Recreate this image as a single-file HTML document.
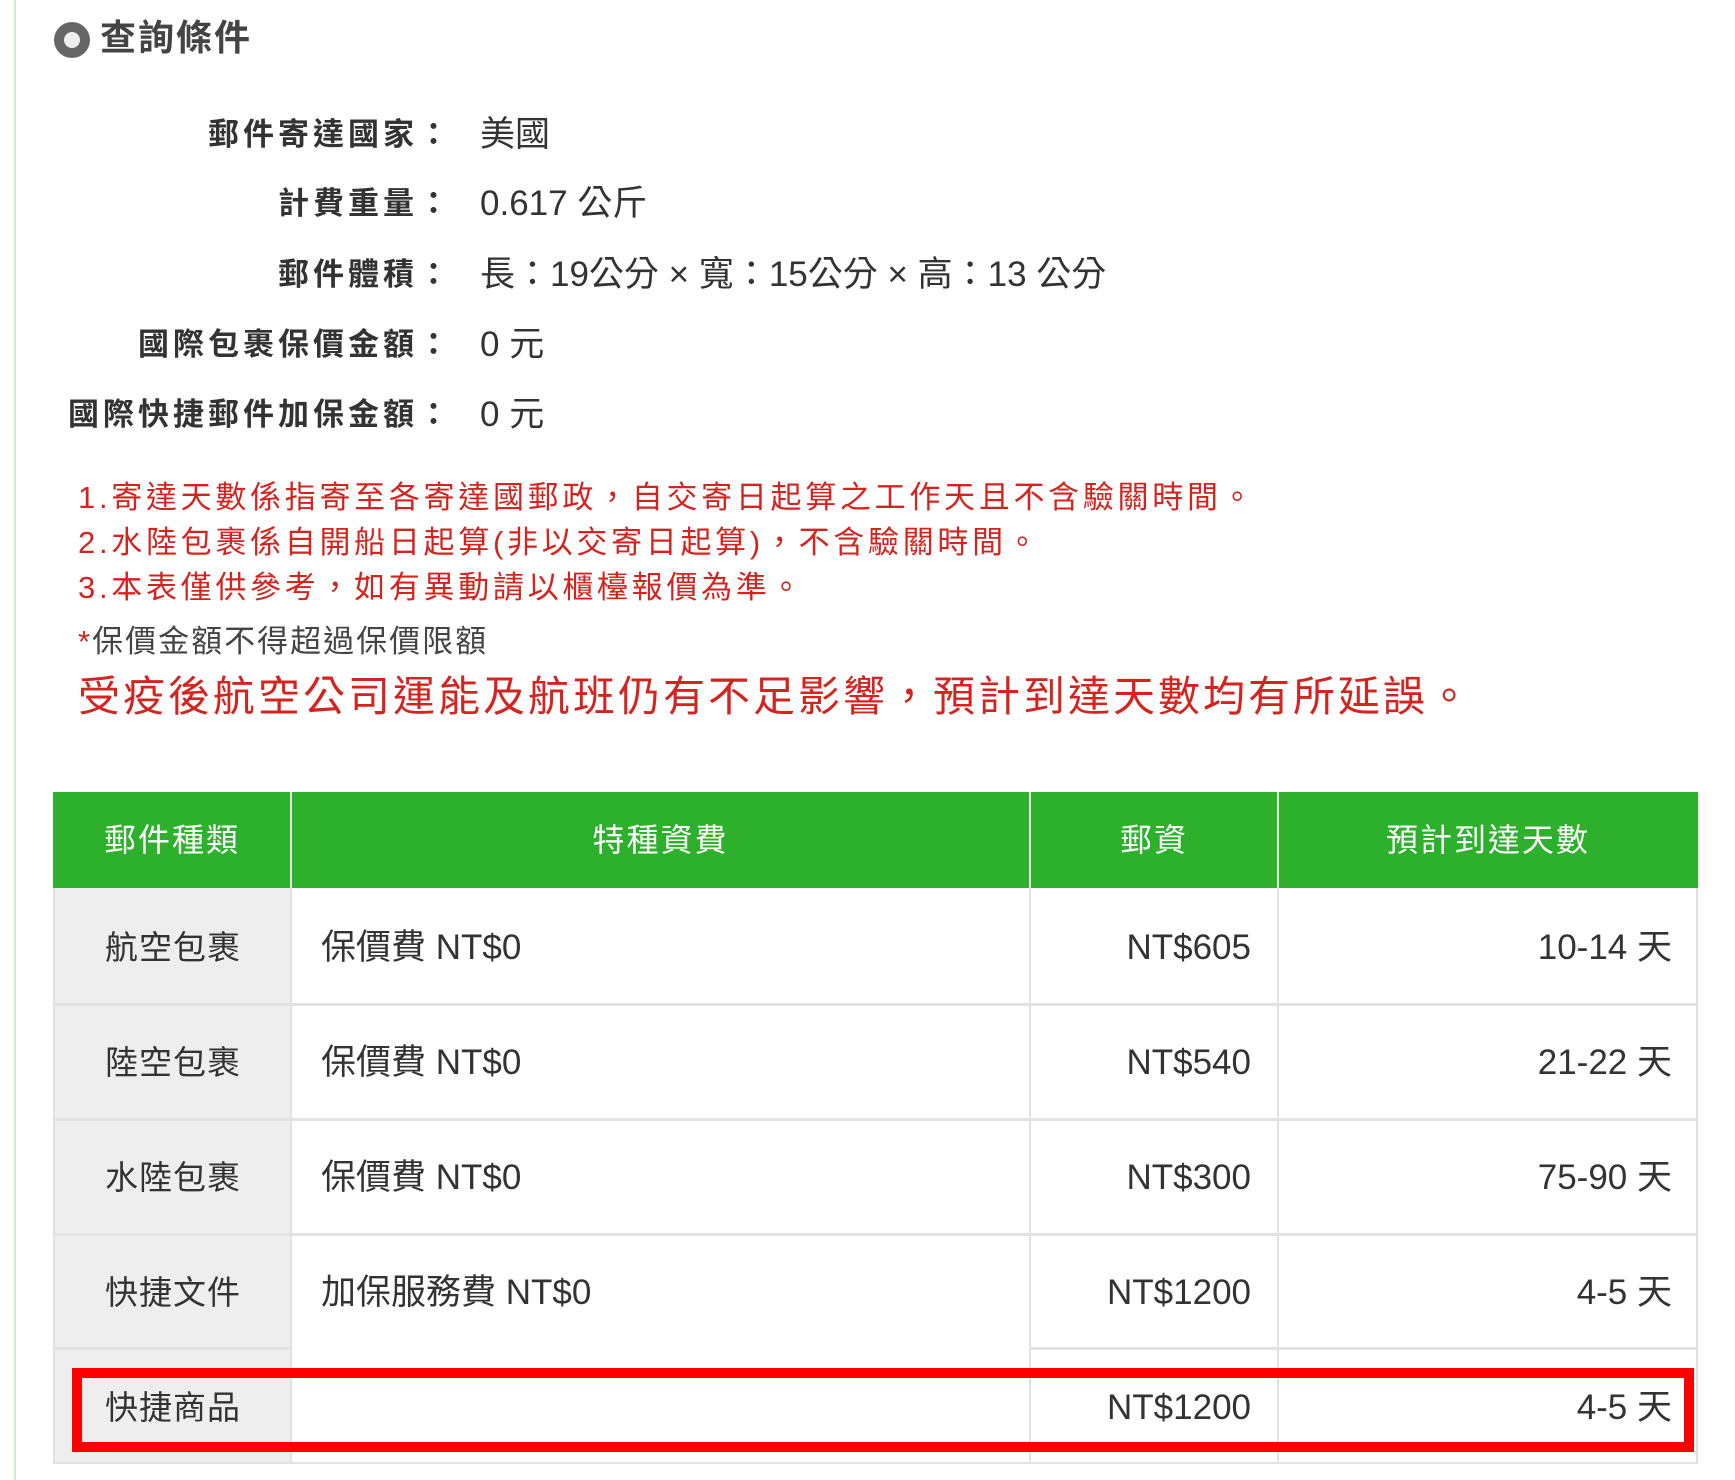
<!DOCTYPE html>
<html><head><meta charset="utf-8"><style>
*{margin:0;padding:0;box-sizing:border-box}
body{width:1735px;height:1480px;background:#fff;position:relative;overflow:hidden;font-family:"Liberation Sans","Noto Sans CJK TC",sans-serif;color:#333}
.a{position:absolute;white-space:nowrap}
.lbl{position:absolute;right:1282px;font-weight:bold;font-size:31px;letter-spacing:4px;color:#333;line-height:40px}
.val{position:absolute;left:480px;font-size:35px;color:#333;line-height:40px}
.red{color:#d42420;font-size:31px;letter-spacing:3.7px;left:78px;line-height:40px}
.cell{position:absolute;font-size:35px;line-height:40px;color:#333;white-space:nowrap}
</style></head><body>
<div class="a" style="left:14px;top:0;width:2px;height:1480px;background:#cdeccd"></div>
<div class="a" style="left:54px;top:22px;width:36px;height:36px;border-radius:50%;background:#666"></div>
<div class="a" style="left:64px;top:32px;width:16px;height:16px;border-radius:50%;background:#eee"></div>
<div class="a" style="left:100px;top:16px;font-size:36px;letter-spacing:2px;color:#444;line-height:44px;font-weight:bold">查詢條件</div>

<div class="lbl" style="top:115px">郵件寄達國家：</div><div class="val" style="top:115px">美國</div>
<div class="lbl" style="top:184px">計費重量：</div><div class="val" style="top:184px">0.617 公斤</div>
<div class="lbl" style="top:255px">郵件體積：</div><div class="val" style="top:255px">長：19公分 × 寬：15公分 × 高：13 公分</div>
<div class="lbl" style="top:325px">國際包裹保價金額：</div><div class="val" style="top:325px">0 元</div>
<div class="lbl" style="top:395px">國際快捷郵件加保金額：</div><div class="val" style="top:395px">0 元</div>

<div class="a red" style="top:478px">1.寄達天數係指寄至各寄達國郵政，自交寄日起算之工作天且不含驗關時間。</div>
<div class="a red" style="top:523px">2.水陸包裹係自開船日起算(非以交寄日起算)，不含驗關時間。</div>
<div class="a red" style="top:568px">3.本表僅供參考，如有異動請以櫃檯報價為準。</div>
<div class="a" style="left:78px;top:622px;font-size:31px;letter-spacing:2px;color:#444;line-height:40px"><span style="color:#d42420">*</span>保價金額不得超過保價限額</div>
<div class="a" style="left:78px;top:670px;font-size:42px;letter-spacing:3px;color:#d42420;line-height:54px">受疫後航空公司運能及航班仍有不足影響，預計到達天數均有所延誤。</div>

<!-- table -->
<div class="a" style="left:53px;top:792px;width:1645px;height:96px;background:#2db12d"></div>
<div class="a" style="left:53px;top:888px;width:238px;height:576px;background:#eeeeee"></div>
<div class="a" style="left:53px;top:888px;width:1645px;height:576px;border:2px solid #e2e2e2;border-top:none"></div>
<div class="a" style="left:290px;top:792px;width:2px;height:672px;background:#e2e2e2"></div>
<div class="a" style="left:1029px;top:792px;width:2px;height:672px;background:#e2e2e2"></div>
<div class="a" style="left:1277px;top:792px;width:2px;height:672px;background:#e2e2e2"></div>
<div class="a" style="left:53px;top:1003px;width:1645px;height:3px;background:#e2e2e2"></div>
<div class="a" style="left:53px;top:1118px;width:1645px;height:3px;background:#e2e2e2"></div>
<div class="a" style="left:53px;top:1233px;width:1645px;height:3px;background:#e2e2e2"></div>
<div class="a" style="left:53px;top:1347px;width:238px;height:3px;background:#e2e2e2"></div>
<div class="a" style="left:1030px;top:1347px;width:668px;height:3px;background:#e2e2e2"></div>

<div class="cell" style="left:53px;width:238px;text-align:center;top:820px;color:#fff;font-size:32px;letter-spacing:2px">郵件種類</div>
<div class="cell" style="left:291px;width:739px;text-align:center;top:820px;color:#fff;font-size:32px;letter-spacing:2px">特種資費</div>
<div class="cell" style="left:1030px;width:248px;text-align:center;top:820px;color:#fff;font-size:32px;letter-spacing:2px">郵資</div>
<div class="cell" style="left:1278px;width:420px;text-align:center;top:820px;color:#fff;font-size:32px;letter-spacing:2px">預計到達天數</div>

<div class="cell" style="left:105px;top:928px;letter-spacing:1px;font-size:33px">航空包裹</div>
<div class="cell" style="left:321px;top:928px">保價費 NT$0</div>
<div class="cell" style="right:484px;top:928px">NT$605</div>
<div class="cell" style="right:63px;top:928px">10-14 天</div>

<div class="cell" style="left:105px;top:1043px;letter-spacing:1px;font-size:33px">陸空包裹</div>
<div class="cell" style="left:321px;top:1043px">保價費 NT$0</div>
<div class="cell" style="right:484px;top:1043px">NT$540</div>
<div class="cell" style="right:63px;top:1043px">21-22 天</div>

<div class="cell" style="left:105px;top:1158px;letter-spacing:1px;font-size:33px">水陸包裹</div>
<div class="cell" style="left:321px;top:1158px">保價費 NT$0</div>
<div class="cell" style="right:484px;top:1158px">NT$300</div>
<div class="cell" style="right:63px;top:1158px">75-90 天</div>

<div class="cell" style="left:105px;top:1273px;letter-spacing:1px;font-size:33px">快捷文件</div>
<div class="cell" style="left:321px;top:1273px">加保服務費 NT$0</div>
<div class="cell" style="right:484px;top:1273px">NT$1200</div>
<div class="cell" style="right:63px;top:1273px">4-5 天</div>

<div class="cell" style="left:105px;top:1388px;letter-spacing:1px;font-size:33px">快捷商品</div>
<div class="cell" style="right:484px;top:1388px">NT$1200</div>
<div class="cell" style="right:63px;top:1388px">4-5 天</div>

<div class="a" style="left:72px;top:1368px;width:1622px;height:84px;border:10px solid #f00"></div>
</body></html>
